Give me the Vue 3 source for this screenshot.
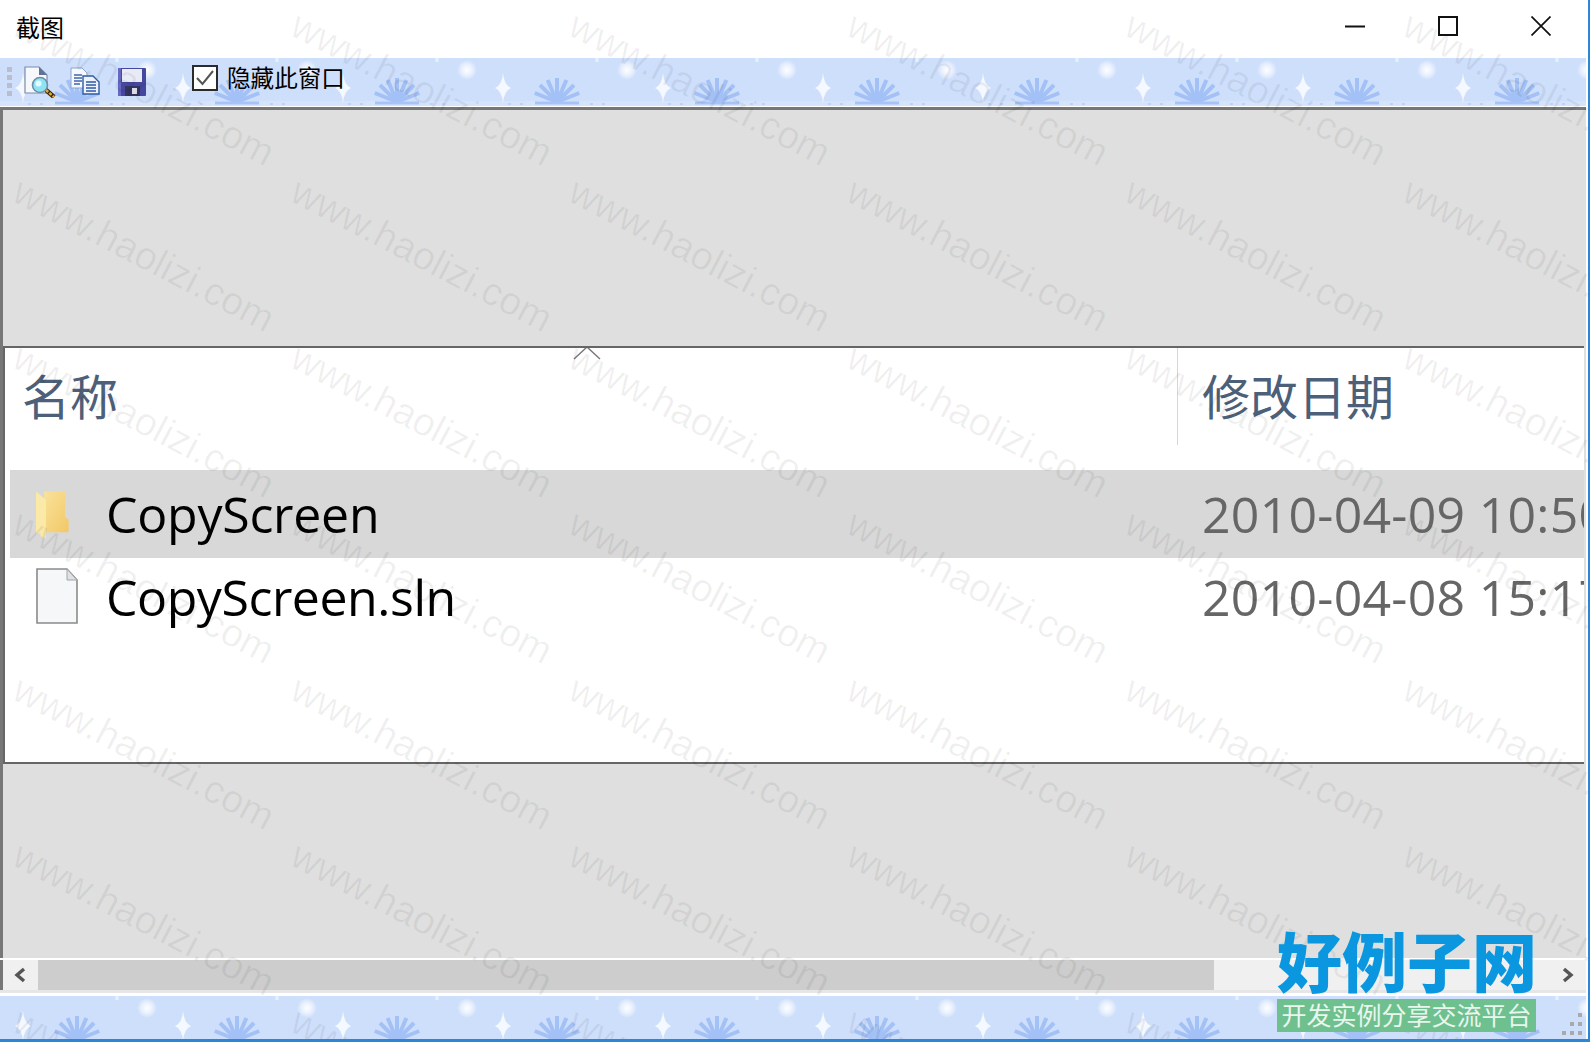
<script setup>
const marks = []
for (let r = 0; r < 7; r++) {
  for (let c = 0; c < 6; c++) {
    marks.push({ id: r + '-' + c, x: 10 + 278 * c, y: 34 + 166 * r })
  }
}
const rays = [-68, -45, -23, 0, 23, 45, 68]
</script>

<template>
  <div class="window">
    <header class="titlebar">
      <span class="title">截图</span>
      <div class="controls">
        <svg width="20" height="20" viewBox="0 0 20 20"><path d="M0 10.5h20" stroke="#111" stroke-width="2" /></svg>
        <svg width="20" height="20" viewBox="0 0 20 20"><rect x="1" y="1" width="18" height="18" fill="none" stroke="#111" stroke-width="2" /></svg>
        <svg width="20" height="20" viewBox="0 0 20 20"><path d="M0.5 0.5l19 19M19.5 0.5l-19 19" stroke="#111" stroke-width="1.7" /></svg>
      </div>
    </header>

    <div class="toolbar">
      <svg class="pattern" width="100%" height="100%">
        <defs>
          <radialGradient id="glow">
            <stop offset="0" stop-color="#fff" stop-opacity="0.95" />
            <stop offset="0.5" stop-color="#fff" stop-opacity="0.6" />
            <stop offset="1" stop-color="#fff" stop-opacity="0" />
          </radialGradient>
          <pattern id="tile" width="160" height="48" patternUnits="userSpaceOnUse">
            <rect width="160" height="48" fill="#cedffc" />
            <rect y="43" width="160" height="5" fill="#d6e4fb" />
            <g stroke="#a3c1f6" stroke-width="4">
              <path v-for="a in rays" :key="a" d="M77 44V20" :transform="`rotate(${a} 77 44)`" />
            </g>
            <path d="M55 45h44" stroke="#a8c4f6" stroke-width="3" />
            <path d="M110 46h3M122 46h3M28 46h3M40 46h3" stroke="#bcd2f8" stroke-width="2" />
            <circle cx="147" cy="12" r="10" fill="url(#glow)" />
            <path d="M23 15Q24 27 31 30Q24 33 23 45Q22 33 15 30Q22 27 23 15Z" fill="#f4f8ff" />
            <path d="M117 0v4" stroke="#e8f0fe" stroke-width="3" />
          </pattern>
        </defs>
        <rect width="100%" height="100%" fill="url(#tile)" />
      </svg>
      <div class="grip"><i></i><i></i><i></i><i></i></div>
      <svg class="tool preview" width="32" height="32" viewBox="0 0 32 32">
        <path d="M1 1h14l8 8v18H1z" fill="#f7f8fb" stroke="#7d8ba6" stroke-width="1.2" />
        <path d="M15 1v8h8z" fill="#5f7396" />
        <path d="M22 24l8 7" stroke="#3a2a10" stroke-width="4.5" />
        <path d="M22 24l8 7" stroke="#e2ad2e" stroke-width="2.4" stroke-dasharray="3 1.4" />
        <circle cx="16" cy="19" r="7.5" fill="#8fe4f4" stroke="#6f8fa7" stroke-width="1.6" />
        <circle cx="14.5" cy="17.5" r="3" fill="#e4fbff" />
      </svg>
      <svg class="tool copy" width="30" height="28" viewBox="0 0 30 28">
        <path d="M1 1h11l5 5v15H1z" fill="#f5f8fd" stroke="#8ea3c9" />
        <path d="M4 8h8M4 11h8M4 14h8M4 17h6" stroke="#3f66ad" stroke-width="1.3" />
        <path d="M13 9h10l6 6v12H13z" fill="#eef3fb" stroke="#2f5aa5" stroke-width="1.4" />
        <path d="M16 15h10M16 18h10M16 21h10M16 24h10" stroke="#2f5aa5" stroke-width="1.3" />
      </svg>
      <svg class="tool save" width="28" height="28" viewBox="0 0 28 28">
        <rect width="28" height="28" rx="1" fill="#46489f" />
        <path d="M0 0h3v28H0z" fill="#6468bf" />
        <rect x="4" y="1" width="20" height="13" fill="#e8eaf6" />
        <rect x="7" y="18" width="15" height="10" fill="#33355f" />
        <rect x="14" y="20" width="5" height="6" fill="#d9dbe6" />
      </svg>
      <label class="hide">
        <span class="checkbox">
          <svg width="20" height="18" viewBox="0 0 20 18"><path d="M2 9l5.5 6L18 2" fill="none" stroke="#555" stroke-width="2" /></svg>
        </span>
        <span class="hide-text">隐藏此窗口</span>
      </label>
    </div>

    <main class="panel">
      <section class="capture">
        <svg class="sort" width="28" height="14" viewBox="0 0 28 14"><path d="M1 13L14 1l13 12" fill="none" stroke="#777" stroke-width="1.4" /></svg>
        <div class="heads">
          <div class="head name">名称</div>
          <div class="head date">修改日期</div>
        </div>
        <div class="row selected">
          <svg class="row-icon folder" width="38" height="52" viewBox="0 0 42 54">
            <defs>
              <linearGradient id="fold" x1="0" x2="1" y1="0" y2="1">
                <stop offset="0" stop-color="#f9e29a" />
                <stop offset="1" stop-color="#f2c866" />
              </linearGradient>
            </defs>
            <path d="M9 0h23v28l4 3v14H9z" fill="url(#fold)" />
            <path d="M0 0l11 9v43l-6-3v-3H0z" fill="#fbe9a8" />
          </svg>
          <span class="file first">CopyScreen</span>
          <span class="stamp">2010-04-09 10:50</span>
        </div>
        <div class="row second">
          <svg class="row-icon" width="42" height="56" viewBox="0 0 42 56">
            <path d="M1 1h30l10 11v43H1z" fill="#f5f7f9" stroke="#8b8b8b" stroke-width="1.6" />
            <path d="M31 1v11h10z" fill="#dfe1e4" stroke="#a4a4a4" stroke-width="1" />
          </svg>
          <span class="file">CopyScreen.sln</span>
          <span class="stamp">2010-04-08 15:17</span>
        </div>
      </section>
    </main>

    <div class="scrollbar">
      <svg class="arrow" width="12" height="16" viewBox="0 0 12 16"><path d="M10 2L3 8l7 6" fill="none" stroke="#555" stroke-width="3.4" /></svg>
      <div class="thumb"></div>
      <svg class="arrow right" width="12" height="16" viewBox="0 0 12 16"><path d="M2 2l7 6-7 6" fill="none" stroke="#555" stroke-width="3.4" /></svg>
    </div>

    <footer class="statusbar">
      <svg class="pattern" width="100%" height="100%"><rect width="100%" height="100%" fill="url(#tile)" /></svg>
      <svg class="resize" width="21" height="22" viewBox="0 0 21 22">
        <g fill="#a9a9a9">
          <rect x="16" y="0" width="4" height="4" /><rect x="16" y="9" width="4" height="4" /><rect x="16" y="18" width="4" height="4" />
          <rect x="8" y="9" width="4" height="4" /><rect x="8" y="18" width="4" height="4" /><rect x="0" y="18" width="4" height="4" />
        </g>
      </svg>
    </footer>

    <svg class="watermark" width="1590" height="1042" viewBox="0 0 1590 1042">
      <text v-for="m in marks" :key="m.id" :x="m.x" :y="m.y" :transform="`rotate(27.5 ${m.x} ${m.y})`">www.haolizi.com</text>
    </svg>

    <div class="logo">
      <div class="logo-name">好例子网</div>
      <div class="logo-sub">开发实例分享交流平台</div>
    </div>
  </div>
</template>

<style scoped>
.window {
  position: relative;
  box-sizing: border-box;
  width: 1590px;
  height: 1042px;
  display: flex;
  flex-direction: column;
  overflow: hidden;
  background: #fff;
  border-right: 2px solid #2b87d6;
  border-bottom: 3px solid #2b87d6;
  padding-right: 2px;
  font-family: "Noto Sans CJK SC", sans-serif;
}
.titlebar {
  height: 58px;
  flex: none;
  display: flex;
  align-items: flex-start;
  justify-content: space-between;
}
.title {
  margin: 10px 0 0 16px;
  font-size: 24px;
  line-height: 34px;
  color: #000;
}
.controls {
  display: flex;
  gap: 73px;
  margin: 16px 35px 0 0;
}
.toolbar {
  position: relative;
  height: 48px;
  flex: none;
  display: flex;
  align-items: flex-start;
}
.pattern {
  position: absolute;
  left: 0;
  top: 0;
}
.grip {
  position: relative;
  margin: 9px 0 0 7px;
  width: 5px;
  display: flex;
  flex-direction: column;
  gap: 3px;
}
.grip i {
  width: 5px;
  height: 5px;
  background: #b9bfca;
}
.tool {
  position: relative;
  flex: none;
}
.preview {
  margin: 8px 0 0 12px;
}
.copy {
  margin: 9px 0 0 14px;
}
.save {
  margin: 10px 0 0 18px;
}
.hide {
  position: relative;
  display: flex;
  align-items: center;
  margin: 7px 0 0 46px;
}
.checkbox {
  box-sizing: border-box;
  width: 26px;
  height: 26px;
  display: flex;
  align-items: center;
  justify-content: center;
  background: #fff;
  border: 2px solid #2b2b2b;
}
.hide-text {
  margin-left: 9px;
  font-size: 23.6px;
  line-height: 26px;
  color: #000;
  position: relative;
  top: -1px;
}
.panel {
  flex: 1;
  min-height: 0;
  box-sizing: border-box;
  border-top: 1px solid #fff;
  background: #dfdfdf;
  box-shadow: inset 3px 0 0 #777, inset 0 3px 0 #777;
  padding: 239px 0 0 3px;
}
.capture {
  position: relative;
  box-sizing: border-box;
  height: 418px;
  margin-right: 2px;
  background: #fff;
  border-top: 2px solid #666;
  border-bottom: 2px solid #666;
  border-left: 2px solid #666;
  overflow: hidden;
}
.sort {
  position: absolute;
  left: 568px;
  top: -2px;
}
.heads {
  height: 122px;
  display: flex;
  color: #4c607a;
  font-size: 48px;
  line-height: 68px;
}
.head {
  padding-top: 12px;
  font-weight: 400;
}
.name {
  width: 1172px;
  padding-left: 17px;
  box-sizing: border-box;
}
.date {
  height: 85px;
  padding-left: 24px;
  border-left: 1px solid #d6d6d6;
}
.row {
  height: 78px;
  margin-left: 5px;
  display: flex;
  align-items: center;
  position: relative;
  white-space: nowrap;
}
.selected {
  height: 88px;
  background: #d8d8d8;
}
.row-icon {
  flex: none;
  margin-left: 26px;
}
.folder {
  position: relative;
  top: 2px;
}
.second .row-icon {
  position: relative;
  top: -1px;
}
.file {
  position: absolute;
  left: 96px;
  font-family: "Open Sans", sans-serif;
  font-size: 50px;
  line-height: 60px;
  letter-spacing: -0.45px;
  color: #000;
}
.file.first {
  letter-spacing: -0.25px;
}
.stamp {
  position: absolute;
  left: 1192px;
  font-family: "Open Sans", sans-serif;
  font-size: 50px;
  line-height: 60px;
  letter-spacing: 0.25px;
  color: #666;
}
.scrollbar {
  position: relative;
  height: 35px;
  flex: none;
  box-sizing: border-box;
  border-top: 2px solid #fff;
  border-bottom: 3px solid #e6e6e6;
  background: #f0f0f0;
  box-shadow: inset 3px 0 0 #777;
  display: flex;
  align-items: stretch;
  padding-left: 38px;
}
.thumb {
  width: 1176px;
  background: #cdcdcd;
}
.arrow {
  position: absolute;
  left: 14px;
  top: 7px;
}
.arrow.right {
  left: auto;
  right: 12px;
}
.statusbar {
  position: relative;
  height: 43px;
  margin-top: 3px;
  flex: none;
}
.resize {
  position: absolute;
  right: 3px;
  bottom: 4px;
}
.watermark {
  position: absolute;
  left: 0;
  top: 0;
  pointer-events: none;
}
.watermark text {
  font-family: "Liberation Sans", sans-serif;
  font-size: 39px;
  fill: rgba(0, 0, 0, 0.06);
}
.logo {
  position: absolute;
  left: 1277px;
  top: 922px;
  width: 259px;
}
.logo-name {
  height: 77px;
  font-size: 65px;
  line-height: 74px;
  font-weight: 900;
  color: #0a97e0;
  white-space: nowrap;
}
.logo-sub {
  height: 33px;
  background: #6fc08f;
  color: #e9f6ee;
  font-size: 25px;
  line-height: 31px;
  text-align: center;
  white-space: nowrap;
}
</style>
